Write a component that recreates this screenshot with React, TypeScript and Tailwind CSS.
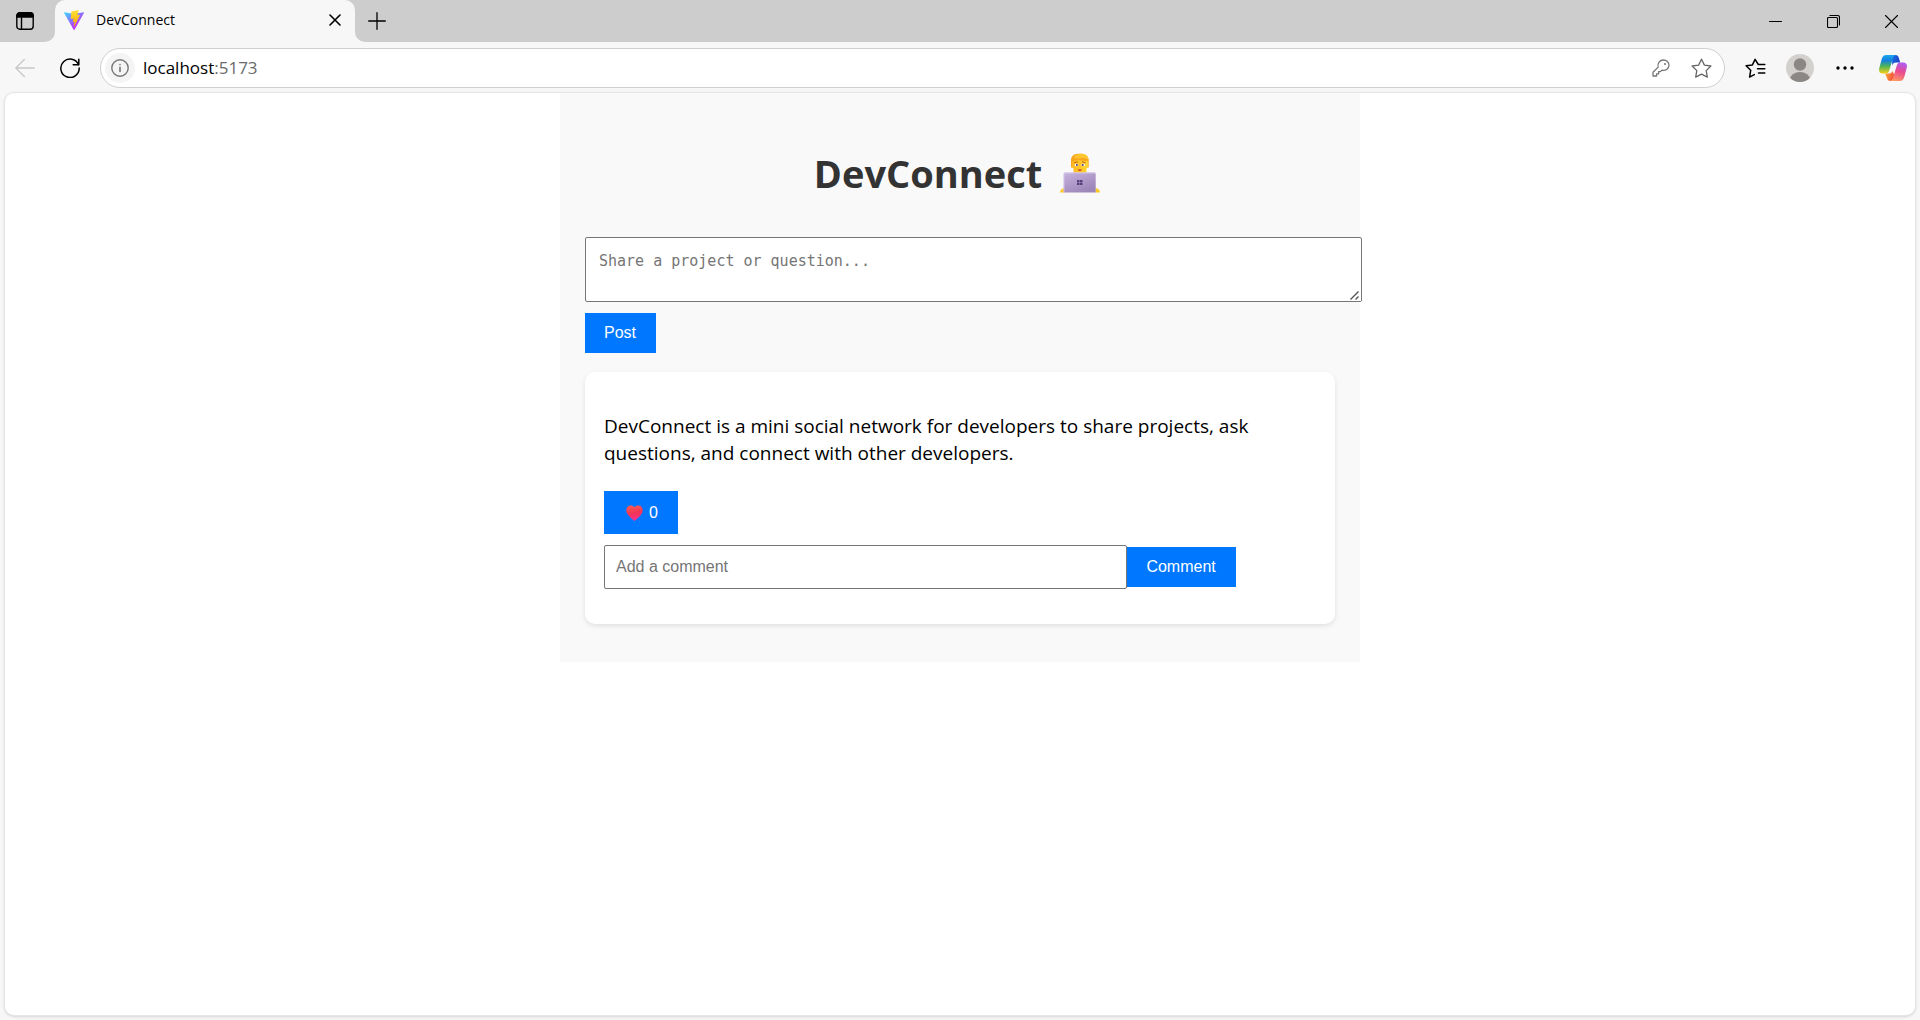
import React from 'react';

const bar = 'bg-[#cdcdcd]';

function ViteLogo() {
  return (
    <svg className="size-5 shrink-0" viewBox="0 0 256 257" aria-hidden="true">
      <defs>
        <linearGradient id="viteA" x1="-.8%" x2="57.6%" y1="7.7%" y2="78.4%">
          <stop offset="0%" stopColor="#41D1FF" />
          <stop offset="100%" stopColor="#BD34FE" />
        </linearGradient>
        <linearGradient id="viteB" x1="43.4%" x2="50.3%" y1="2.2%" y2="89%">
          <stop offset="0%" stopColor="#FFEA83" />
          <stop offset="8.3%" stopColor="#FFDD35" />
          <stop offset="100%" stopColor="#FFA800" />
        </linearGradient>
      </defs>
      <path
        fill="url(#viteA)"
        d="M255.153 37.938L134.897 252.976c-2.483 4.44-8.862 4.466-11.382.048L.875 37.958c-2.746-4.814 1.371-10.646 6.827-9.67l120.385 21.517a6.537 6.537 0 0 0 2.322-.004l117.867-21.483c5.438-.991 9.574 4.796 6.877 9.62Z"
      />
      <path
        fill="url(#viteB)"
        d="M185.432.063L96.44 17.501a3.268 3.268 0 0 0-2.634 3.014l-5.474 92.456a3.268 3.268 0 0 0 3.997 3.378l24.777-5.718c2.318-.535 4.413 1.507 3.936 3.838l-7.361 36.047c-.495 2.426 1.782 4.5 4.151 3.78l15.304-4.649c2.372-.72 4.652 1.36 4.15 3.788l-11.698 56.621c-.732 3.542 3.979 5.473 5.943 2.437l1.313-2.028l72.516-144.72c1.215-2.423-.88-5.186-3.54-4.672l-25.505 4.922c-2.396.462-4.435-1.77-3.759-4.114l16.646-57.705c.677-2.35-1.37-4.583-3.769-4.113Z"
      />
    </svg>
  );
}

type LineProps = { size: string; box: string; width?: number; children: React.ReactNode };

function Line({ size, box, width = 1.4, children }: LineProps) {
  return (
    <svg
      className={size}
      viewBox={box}
      fill="none"
      stroke="currentColor"
      strokeWidth={width}
      strokeLinecap="round"
      strokeLinejoin="round"
      aria-hidden="true"
    >
      {children}
    </svg>
  );
}

function CopilotLogo() {
  return (
    <svg className="h-[26px] w-7" viewBox="0 0 28 26" aria-hidden="true">
      <defs>
        <linearGradient id="cpA" x1="0" y1="0" x2="0" y2="1">
          <stop offset="0" stopColor="#1aa7ec" />
          <stop offset="0.3" stopColor="#1580e0" />
          <stop offset="0.6" stopColor="#4bb45a" />
          <stop offset="1" stopColor="#f7cf16" />
        </linearGradient>
        <linearGradient id="cpB" x1="0.6" y1="0" x2="0.3" y2="1">
          <stop offset="0" stopColor="#b05cf0" />
          <stop offset="0.45" stopColor="#ea4a90" />
          <stop offset="1" stopColor="#ff9a62" />
        </linearGradient>
        <linearGradient id="cpC" x1="0" y1="0" x2="1" y2="0.6">
          <stop offset="0" stopColor="#1a6fe8" />
          <stop offset="1" stopColor="#1c40c4" />
        </linearGradient>
        <linearGradient id="cpD" x1="0" y1="0" x2="1" y2="0.4">
          <stop offset="0" stopColor="#ffb52e" />
          <stop offset="1" stopColor="#f0503c" />
        </linearGradient>
      </defs>
      <path fill="url(#cpC)" d="M13 0h3.600c1.800 0 2.600 1 3.100 2.600l1.500 5H17c-2 0-3.200 1-3.800 3Z" />
      <path fill="url(#cpD)" d="M6 18.500h4.500c1.500 0 2.500-1 3-2.500l2 4.500c-.6 3-1.600 5.500-4 5.500-2.200 0-3-1.200-3.500-3Z" />
      <path
        fill="url(#cpA)"
        d="M7.500 0H17c-1.800.3-2.500 1.500-3.200 3.700l-3.600 11.800c-.6 2-1.600 3-3.600 3H3.800C.6 18.500-.5 16.300.3 13L2.600 4.500C3.400 1.400 4.800 0 7.500 0Z"
      />
      <path
        fill="url(#cpB)"
        d="M20.500 26H11c1.800-.3 2.500-1.500 3.200-3.700l3.600-11.800c.6-2 1.600-3 3.600-3h2.800c3.200 0 4.300 2.200 3.500 5.500l-2.300 8.500c-.8 3.100-2.200 4.500-4.900 4.500Z"
      />
    </svg>
  );
}

function Technologist() {
  return (
    <svg className="h-10 w-10" viewBox="0 0 40 40" role="img" aria-label="Technologist">
      <defs>
        <linearGradient id="lap" x1="0" y1="0" x2="0.6" y2="1">
          <stop offset="0" stopColor="#c6b2df" />
          <stop offset="1" stopColor="#9d86b8" />
        </linearGradient>
        <linearGradient id="face" x1="0" y1="0" x2="1" y2="0">
          <stop offset="0" stopColor="#ffb624" />
          <stop offset="1" stopColor="#ffd72e" />
        </linearGradient>
      </defs>
      <path fill="#ffc928" d="M0 39.500c0-2.400 1.800-4.200 4.500-4.200V39.500ZM40 39.500c0-2.400-1.800-4.200-4.500-4.200V39.500Z" />
      <path fill="#f9a51c" d="M11 14.500V7.500C11 3 14 1 18 .8c5-.8 10.500 1.200 10.700 6.200v7.500Z" />
      <path fill="#ffc52e" d="M14 4c2-3 5-3.500 8-3.200 4 .2 6 2.200 6.500 5.700l-5-1.500-8 .5Z" />
      <path fill="url(#face)" d="M12.300 8c3 .3 5-.7 6-1.700 2.500 1.700 6 2 8.700 1.400.6.300 1 1.300 1.200 3.500.3 2.800-.7 3.800-1.700 4.300v4.200H13.500v-4.500c-1.200-.5-2-2-1.700-4Z" />
      <path stroke="#b5651b" strokeWidth="1" strokeLinecap="round" d="m14.500 9.700 3-.8M22.300 8.900l3 .8" />
      <ellipse cx="16.500" cy="12" rx="1.900" ry="1.300" fill="#fff" />
      <ellipse cx="23.200" cy="12" rx="1.900" ry="1.300" fill="#fff" />
      <circle cx="16.900" cy="12.100" r="1" fill="#54357a" />
      <circle cx="22.800" cy="12.100" r="1" fill="#54357a" />
      <path fill="#c93b2c" d="M17.700 16.500h4.300l-1.200 1.500h-2Z" />
      <path fill="url(#lap)" d="M3.700 21c0-1 .7-1.600 1.600-1.600h28.800c1 0 1.600.6 1.600 1.600v18.500h-32Z" />
      <path stroke="#dccdee" strokeWidth="0.800" d="M4 39V20h31" fill="none" />
      <path fill="#57407a" d="M17 27h2.500v2.200H17ZM20 27h2.500v2.200H20ZM17 29.700h2.500v2.200H17ZM20 29.700h2.500v2.200H20Z" />
    </svg>
  );
}

function Heart() {
  return (
    <svg className="h-4 w-[17px]" viewBox="0 0 17 16" aria-hidden="true">
      <defs>
        <linearGradient id="heart" x1="0.3" y1="0" x2="0.5" y2="1">
          <stop offset="0" stopColor="#ff5a52" />
          <stop offset="0.5" stopColor="#f03555" />
          <stop offset="1" stopColor="#ff2f95" />
        </linearGradient>
      </defs>
      <path fill="url(#heart)" d="M8.500 2.300C10 .2 13 0 14.800 1.300 17 3 17.200 6 15.800 8.600 14.300 11.300 11.200 14 8.500 16 5.800 14 2.700 11.300 1.200 8.600-.2 6 0 3 2.200 1.300 4 0 7 .2 8.500 2.300Z" />
    </svg>
  );
}

function TitleBar() {
  return (
    <header className="flex h-[42px] bg-[#f7f7f7] font-['Open_Sans',sans-serif] text-black">
      <div className={`${bar} flex w-[55px] items-center rounded-br-[10px] pl-4`}>
        <button aria-label="Tab actions">
          <Line size="size-[18px]" box="0 0 18 18">
            <rect x="0.800" y="0.800" width="16.400" height="16.400" rx="3" />
            <path d="M1 4V3.500C1 2 2 1 3.500 1h11C16 1 17 2 17 3.500V5H1Z" fill="currentColor" />
            <path d="M5.500 5v12" />
          </Line>
        </button>
      </div>
      <div className={`${bar} w-[300px]`}>
        <div className="flex h-full items-center rounded-t-[10px] bg-[#f7f7f7] pr-[10px] pb-0.5 pl-[9px]">
          <ViteLogo />
          <span className="ml-3 flex-1 text-sm">DevConnect</span>
          <button aria-label="Close tab" className="p-1">
            <Line size="size-3" box="0 0 12 12" width={1.6}>
              <path d="m1 1 10 10M11 1 1 11" />
            </Line>
          </button>
        </div>
      </div>
      <div className={`${bar} flex flex-1 items-center justify-between rounded-bl-[10px] pr-[22px] pl-[13px]`}>
        <button aria-label="New tab">
          <Line size="size-[18px]" box="0 0 18 18" width={1.300}>
            <path d="M9 .7v16.600M.7 9h16.600" />
          </Line>
        </button>
        <div className="flex items-center gap-[45px]">
          <button aria-label="Minimize">
            <Line size="size-[13px]" box="0 0 13 13" width={1}>
              <path d="M.5 6.500h12" />
            </Line>
          </button>
          <button aria-label="Restore">
            <Line size="size-[13px]" box="0 0 13 13" width={1.100}>
              <rect x="0.500" y="2.500" width="10" height="10" rx="1" />
              <path d="M3 .5h7.500c1.200 0 2 .8 2 2V10" />
            </Line>
          </button>
          <button aria-label="Close window">
            <Line size="size-[13px]" box="0 0 13 13" width={1.100}>
              <path d="m.5.5 12 12M12.500.5l-12 12" />
            </Line>
          </button>
        </div>
      </div>
    </header>
  );
}

function Toolbar() {
  return (
    <div className="flex h-[50px] items-center bg-[#f7f7f7] pt-0.5 pr-[13px] pl-[15px]">
      <button aria-label="Back" className="text-[#c8c8c8]">
        <Line size="size-5" box="0 0 20 20" width={1.300}>
          <path d="M19.300 10H.8M9.300 1.500.8 10l8.500 8.500" />
        </Line>
      </button>
      <button aria-label="Reload" className="ml-[25px] text-black">
        <Line size="size-5" box="0 0 20 20" width={1.500}>
          <path d="M18.600 7A9.200 9.200 0 1 0 19.200 10M18.800 1.200v5.600h-5.600" />
        </Line>
      </button>
      <div className="ml-5 flex h-10 flex-1 items-center rounded-full border border-[#cfcfcf] bg-white pr-3 pl-1">
        <button aria-label="Site information" className="flex size-[30px] items-center justify-center rounded-full bg-[#f4f4f4] text-[#767676]">
          <Line size="size-[18px]" box="0 0 18 18" width={1.400}>
            <circle cx="9" cy="9" r="8.200" />
            <path d="M9 8.300v4.200M9 5.500v.1" strokeWidth="1.600" />
          </Line>
        </button>
        <div className="ml-2 flex-1 font-['Open_Sans',sans-serif] text-[17px] text-black">
          localhost<span className="text-[#6a6a6a]">:5173</span>
        </div>
        <button aria-label="Passwords" className="text-[#767676]">
          <Line size="size-[18px]" box="0 0 18 18" width={1.300}>
            <path d="M11.500 1a5.500 5.500 0 0 0-5.300 7.100L1 13.300V17h3.600v-2.200h2v-2.200h1.800l1.500-1.500A5.300 5.300 0 0 0 17 6.300C17 3.200 14.600 1 11.500 1Z" />
            <circle cx="13" cy="5" r="1" fill="currentColor" stroke="none" />
          </Line>
        </button>
        <button aria-label="Favorite" className="ml-[21px] text-[#666]">
          <Line size="size-[21px]" box="0 0 21 21" width={1.300}>
            <path d="m10.500 1.200 2.900 5.900 6.500.9-4.700 4.600 1.100 6.500-5.800-3-5.800 3 1.100-6.500L1.100 8l6.500-.9Z" />
          </Line>
        </button>
      </div>
      <button aria-label="Favorites list" className="ml-5 text-black">
        <Line size="h-[21px] w-[21px]" box="0 0 21 21" width={1.500}>
          <path d="M19.800 6.500h-6.500L10.100 1.300 7.400 6.900 1.100 7.800l4.600 4.500-1.100 6.800 4.700-2.500M12.500 10.800h7.300M13.500 15h6.300" />
        </Line>
      </button>
      <button aria-label="Profile" className="ml-5">
        <svg className="size-7" viewBox="0 0 28 28" aria-hidden="true">
          <clipPath id="av">
            <circle cx="14" cy="14" r="14" />
          </clipPath>
          <g clipPath="url(#av)">
            <rect width="28" height="28" fill="#d3d1ce" />
            <circle cx="14" cy="10.500" r="6.200" fill="#8b8784" />
            <ellipse cx="14" cy="25.500" rx="10" ry="7.500" fill="#8b8784" />
          </g>
        </svg>
      </button>
      <button aria-label="Settings and more" className="ml-[22px] text-black">
        <svg className="h-4 w-[18px]" viewBox="0 0 18 16" aria-hidden="true">
          <g fill="currentColor">
            <circle cx="2" cy="8" r="1.700" />
            <circle cx="9" cy="8" r="1.700" />
            <circle cx="16" cy="8" r="1.700" />
          </g>
        </svg>
      </button>
      <button aria-label="Copilot" className="ml-[25px]">
        <CopilotLogo />
      </button>
    </div>
  );
}

const blueButton = "block bg-[#0077ff] pr-5 pl-[19px] font-['Liberation_Sans',sans-serif] text-base leading-5 text-white";

export default function App() {
  return (
    <div className="flex min-h-screen flex-col bg-[#f7f7f7]">
      <TitleBar />
      <Toolbar />
      <main className="mx-1 mb-1 flex-1 overflow-hidden rounded-[10px] border border-[#e6e6e6] bg-white shadow-sm">
        <div className="mx-auto max-w-[800px] bg-[#f9f9f9] px-[25px] pt-[53px] pb-[38px] font-['Open_Sans',sans-serif]">
          <h1 className="flex items-center justify-center gap-[18px] pr-1.5 text-[38px] leading-[54px] font-bold text-[#333]">
            DevConnect <Technologist />
          </h1>
          <div className="relative mt-[37px] w-[calc(100%+27px)]">
            <textarea
              aria-label="Share a project or question"
              placeholder="Share a project or question..."
              className="block h-[65px] w-full resize rounded-[2px] border border-[#767676] bg-white px-[13px] py-[13px] font-['DejaVu_Sans_Mono',monospace] text-[15px] leading-5 text-black placeholder:text-[#757575] [&::-webkit-resizer]:bg-white"
            />
            <svg className="pointer-events-none absolute right-[3px] bottom-0.5 size-[9px] text-[#555]" viewBox="0 0 9 9" aria-hidden="true">
              <path d="M.5 8.500l8-8M5.500 8.500l3-3" stroke="currentColor" strokeWidth="1.400" />
            </svg>
          </div>
          <button className={`${blueButton} mt-[11px] py-[10px]`}>Post</button>
          <article className="mt-[19px] rounded-[10px] bg-white px-[19px] pt-[41px] pb-[35px] shadow-[0_2px_5px_rgba(0,0,0,0.1)]">
            <p className="text-[19px] leading-[27px] text-black">
              DevConnect is a mini social network for developers to share projects, ask questions, and connect with other
              developers.
            </p>
            <button aria-label="Like, 0" className={`${blueButton} mt-6 pt-3 pb-[11px]`}>
              <span className="flex items-center gap-1.5 pl-[3px]">
                <Heart /> 0
              </span>
            </button>
            <form className="mt-[11px] flex items-center" onSubmit={(e) => e.preventDefault()}>
              <input
                type="text"
                aria-label="Add a comment"
                placeholder="Add a comment"
                className="box-content h-5 w-[70%] rounded-[2px] border border-[#767676] bg-white py-[11px] pr-3 pl-[11px] font-['Liberation_Sans',sans-serif] text-base text-black placeholder:text-[#757575]"
              />
              <button className={`${blueButton} py-[10px]`}>Comment</button>
            </form>
          </article>
        </div>
      </main>
    </div>
  );
}
